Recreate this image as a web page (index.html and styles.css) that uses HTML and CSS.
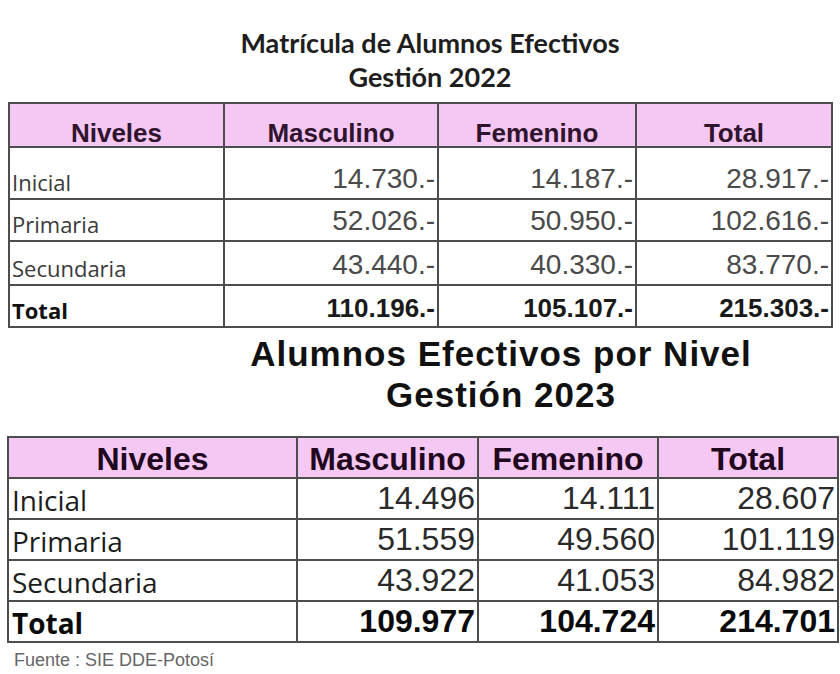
FILE: index.html
```html
<!DOCTYPE html>
<html lang="es">
<head>
<meta charset="utf-8">
<title>Matrícula de Alumnos Efectivos</title>
<link rel="stylesheet" href="styles.css">
</head>
<body>
<div class="page">
  <section class="block block-2022">
    <h1 class="title-2022">Matrícula de Alumnos Efectivos<br>Gestión 2022</h1>
    <table class="t2022">
      <colgroup><col class="c1"><col class="c2"><col class="c3"><col class="c4"></colgroup>
      <thead>
        <tr><th>Niveles</th><th>Masculino</th><th>Femenino</th><th>Total</th></tr>
      </thead>
      <tbody>
        <tr class="r-first"><td class="lbl">Inicial</td><td class="num">14.730.-</td><td class="num">14.187.-</td><td class="num">28.917.-</td></tr>
        <tr class="r-mid"><td class="lbl">Primaria</td><td class="num">52.026.-</td><td class="num">50.950.-</td><td class="num">102.616.-</td></tr>
        <tr class="r-sec"><td class="lbl">Secundaria</td><td class="num">43.440.-</td><td class="num">40.330.-</td><td class="num">83.770.-</td></tr>
        <tr class="r-total"><td class="lbl">Total</td><td class="num">110.196.-</td><td class="num">105.107.-</td><td class="num">215.303.-</td></tr>
      </tbody>
    </table>
  </section>
  <section class="block block-2023">
    <h2 class="title-2023">Alumnos Efectivos por Nivel<br>Gestión 2023</h2>
    <table class="t2023">
      <colgroup><col class="c1"><col class="c2"><col class="c3"><col class="c4"></colgroup>
      <thead>
        <tr><th>Niveles</th><th>Masculino</th><th>Femenino</th><th>Total</th></tr>
      </thead>
      <tbody>
        <tr><td class="lbl">Inicial</td><td class="num">14.496</td><td class="num">14.111</td><td class="num">28.607</td></tr>
        <tr><td class="lbl">Primaria</td><td class="num">51.559</td><td class="num">49.560</td><td class="num">101.119</td></tr>
        <tr><td class="lbl">Secundaria</td><td class="num">43.922</td><td class="num">41.053</td><td class="num">84.982</td></tr>
        <tr class="r-total"><td class="lbl">Total</td><td class="num">109.977</td><td class="num">104.724</td><td class="num">214.701</td></tr>
      </tbody>
    </table>
    <p class="source">Fuente : SIE DDE-Potosí</p>
  </section>
</div>
</body>
</html>
```

FILE: styles.css
```css
* { box-sizing: border-box; }
html, body { margin: 0; padding: 0; background: #ffffff; }
body { width: 840px; height: 674px; overflow: hidden; }

.page {
  display: flex;
  flex-direction: column;
  padding-top: 26px;
}

.block { display: flex; flex-direction: column; }

/* ---------- 2022 ---------- */
.title-2022 {
  margin: 0 0 8px 0;
  padding-left: 20px;
  text-align: center;
  font-family: "Lato", "Open Sans", sans-serif;
  font-weight: 700;
  font-size: 27px;
  line-height: 34px;
  color: #1e1e1e;
}

table {
  border-collapse: collapse;
  table-layout: fixed;
}

.t2022 {
  margin-left: 8px;
  width: 823px;
}
.t2022 .c1 { width: 215px; }
.t2022 .c2 { width: 214px; }
.t2022 .c3 { width: 198px; }
.t2022 .c4 { width: 196px; }

th, td {
  border: 2px solid #4d4d4d;
  padding: 0;
}

.t2022 th {
  height: 44px;
  background: #f5c7f3;
  font-family: "Liberation Sans", Arial, sans-serif;
  font-weight: 700;
  font-size: 26px;
  color: #30142e;
  vertical-align: bottom;
  padding-bottom: 3px;
  line-height: 20px;
}

.t2022 td {
  vertical-align: bottom;
  line-height: 1;
  padding-bottom: 5px;
}
.t2022 .r-first td { height: 52px; }
.t2022 .r-mid td { height: 42px; }
.t2022 .r-sec td { height: 44px; }
.t2022 .r-total td { height: 42px; }

.t2022 .lbl {
  padding-left: 2px;
  font-family: "Open Sans", sans-serif;
  font-size: 22px;
  color: #3a3a3a;
}
.t2022 .num {
  text-align: right;
  padding-right: 2px;
  font-family: "Liberation Sans", Arial, sans-serif;
  font-size: 28px;
  color: #4a4a4a;
}
.t2022 .r-total .lbl { font-weight: 700; color: #111; }
.t2022 .r-total .num { font-weight: 700; font-size: 26px; color: #1a1a1a; }

/* ---------- 2023 ---------- */
.title-2023 {
  margin: 5px 0 21px 0;
  padding-left: 162px;
  text-align: center;
  font-family: "Liberation Sans", Arial, sans-serif;
  font-weight: 700;
  font-size: 35px;
  letter-spacing: 1px;
  line-height: 41px;
  color: #111111;
}

.t2023 {
  margin-left: 7px;
  width: 830px;
}
.t2023 .c1 { width: 289px; }
.t2023 .c2 { width: 181px; }
.t2023 .c3 { width: 180px; }
.t2023 .c4 { width: 180px; }

.t2023 th {
  height: 41px;
  background: #f5c7f3;
  font-family: "Liberation Sans", Arial, sans-serif;
  font-weight: 700;
  font-size: 32px;
  color: #22081f;
  vertical-align: bottom;
  padding-bottom: 2px;
  line-height: 1;
}

.t2023 td {
  height: 41px;
  vertical-align: bottom;
  line-height: 1;
  padding-bottom: 4px;
}
.t2023 .lbl {
  padding-left: 3px;
  font-family: "Open Sans", sans-serif;
  font-size: 28px;
  color: #1c1c1c;
}
.t2023 .num {
  text-align: right;
  padding-right: 2px;
  font-family: "Liberation Sans", Arial, sans-serif;
  font-size: 32px;
  color: #2a2a2a;
}
.t2023 .r-total .lbl { font-weight: 700; color: #0a0a0a; }
.t2023 .r-total .num { font-weight: 700; color: #0a0a0a; }

.source {
  margin: 7px 0 0 14px;
  font-family: "Liberation Sans", Arial, sans-serif;
  font-size: 18px;
  line-height: 20px;
  color: #666666;
}
```
